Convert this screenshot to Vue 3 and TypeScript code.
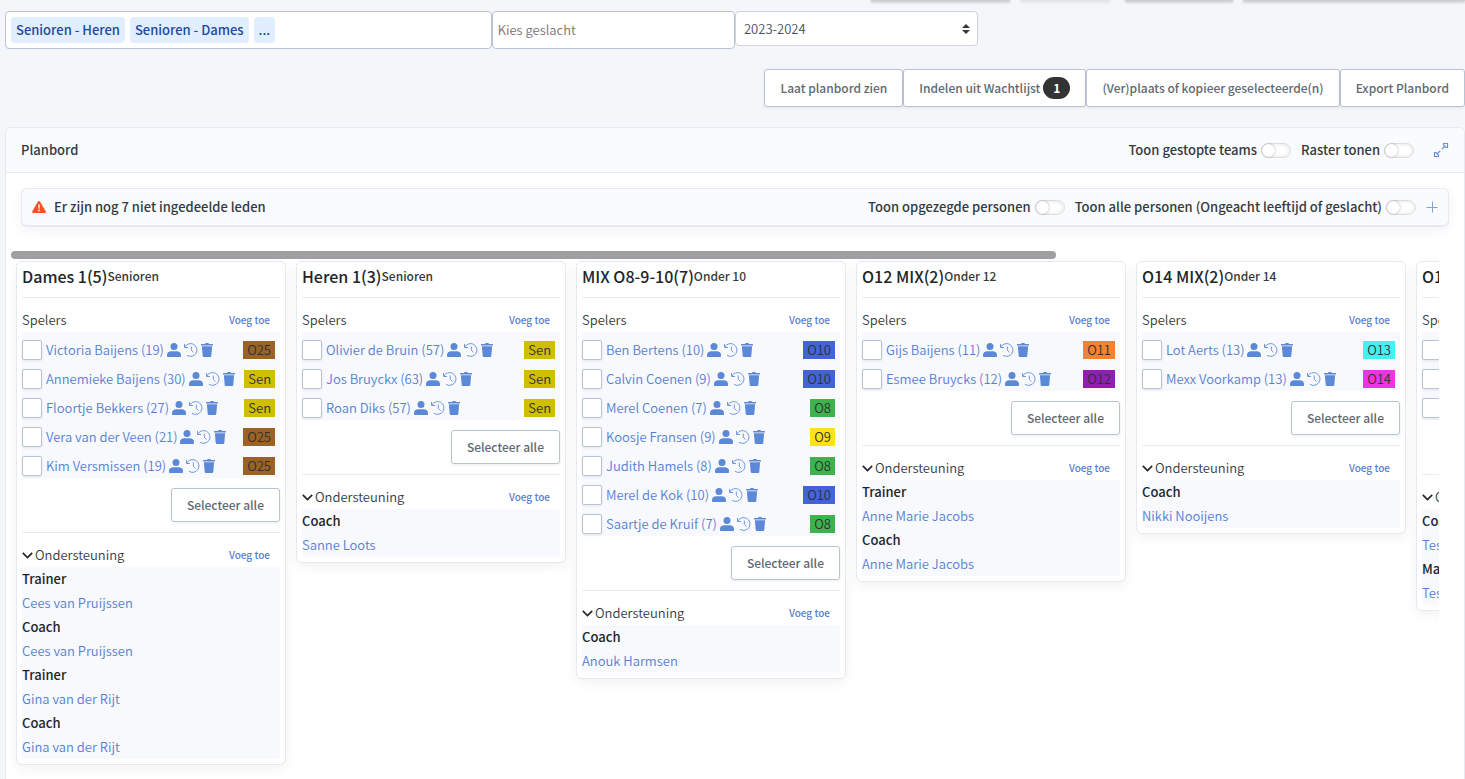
<script setup lang="ts">
import { ref } from 'vue'

interface Player {
  name: string
  group: string
}
interface Staff {
  role: string
  name: string
}
interface Team {
  title: string
  category: string
  players: Player[]
  staff: Staff[]
}

const groupColors: Record<string, string> = {
  O25: '#9a6324',
  Sen: '#d0be00',
  O8: '#3cb44b',
  O9: '#ffe119',
  O10: '#4363d8',
  O11: '#f58231',
  O12: '#911eb4',
  O13: '#46f0f0',
  O14: '#f032e6',
}

const p = (name: string, group: string): Player => ({ name, group })
const s = (role: string, name: string): Staff => ({ role, name })

const teams: Team[] = [
  {
    title: 'Dames 1(5)',
    category: 'Senioren',
    players: [
      p('Victoria Baijens (19)', 'O25'),
      p('Annemieke Baijens (30)', 'Sen'),
      p('Floortje Bekkers (27)', 'Sen'),
      p('Vera van der Veen (21)', 'O25'),
      p('Kim Versmissen (19)', 'O25'),
    ],
    staff: [
      s('Trainer', 'Cees van Pruijssen'),
      s('Coach', 'Cees van Pruijssen'),
      s('Trainer', 'Gina van der Rijt'),
      s('Coach', 'Gina van der Rijt'),
    ],
  },
  {
    title: 'Heren 1(3)',
    category: 'Senioren',
    players: [p('Olivier de Bruin (57)', 'Sen'), p('Jos Bruyckx (63)', 'Sen'), p('Roan Diks (57)', 'Sen')],
    staff: [s('Coach', 'Sanne Loots')],
  },
  {
    title: 'MIX O8-9-10(7)',
    category: 'Onder 10',
    players: [
      p('Ben Bertens (10)', 'O10'),
      p('Calvin Coenen (9)', 'O10'),
      p('Merel Coenen (7)', 'O8'),
      p('Koosje Fransen (9)', 'O9'),
      p('Judith Hamels (8)', 'O8'),
      p('Merel de Kok (10)', 'O10'),
      p('Saartje de Kruif (7)', 'O8'),
    ],
    staff: [s('Coach', 'Anouk Harmsen')],
  },
  {
    title: 'O12 MIX(2)',
    category: 'Onder 12',
    players: [p('Gijs Baijens (11)', 'O11'), p('Esmee Bruycks (12)', 'O12')],
    staff: [s('Trainer', 'Anne Marie Jacobs'), s('Coach', 'Anne Marie Jacobs')],
  },
  {
    title: 'O14 MIX(2)',
    category: 'Onder 14',
    players: [p('Lot Aerts (13)', 'O13'), p('Mexx Voorkamp (13)', 'O14')],
    staff: [s('Coach', 'Nikki Nooijens')],
  },
  {
    title: 'O1',
    category: '',
    players: [p('', ''), p('', ''), p('', '')],
    staff: [s('Coach', 'Tes'), s('Ma', 'Tes')],
  },
]

const season = ref('2023-2024')
const gender = ref('')
</script>

<template>
  <main class="page">
    <div class="top-actions" aria-hidden="true">
      <span class="edge w-a"></span>
      <span class="edge w-b light"></span>
      <span class="edge w-c"></span>
      <span class="edge w-d"></span>
    </div>

    <section class="filters">
      <div class="tags">
        <button type="button" class="tag">Senioren - Heren</button>
        <button type="button" class="tag">Senioren - Dames</button>
        <button type="button" class="tag">...</button>
      </div>
      <input v-model="gender" class="gender" type="text" placeholder="Kies geslacht" aria-label="Kies geslacht" />
      <div class="season">
        <select v-model="season" aria-label="Seizoen">
          <option>2023-2024</option>
        </select>
        <svg viewBox="0 0 8 10" width="8" height="10" aria-hidden="true">
          <path d="M4 0 8 4H0zM4 10 0 6h8z" fill="#343a40" />
        </svg>
      </div>
    </section>

    <nav class="actions">
      <button type="button" class="btn">Laat planbord zien</button>
      <button type="button" class="btn">Indelen uit Wachtlijst<span class="count">1</span></button>
      <button type="button" class="btn">(Ver)plaats of kopieer geselecteerde(n)</button>
      <button type="button" class="btn">Export Planbord</button>
    </nav>

    <section class="panel">
      <header class="panel-head">
        <h1>Planbord</h1>
        <label class="switch">Toon gestopte teams<input type="checkbox" /></label>
        <label class="switch">Raster tonen<input type="checkbox" /></label>
        <button type="button" class="icon-btn expand" aria-label="Volledig scherm">
          <svg viewBox="0 0 16 16" width="16" height="16" fill="none" stroke="#6a90dc" stroke-width="1.200">
            <path d="M10.500 1.500h4v4h-1.500l-2.500-2.500zM12 4 8.800 7.200M5.500 14.500h-4v-4H3l2.500 2.500zM4 12l3.200-3.200" />
          </svg>
        </button>
      </header>

      <div class="notice">
        <svg class="warn" viewBox="0 0 14 12" width="14" height="12" aria-hidden="true">
          <path d="M7 0c.5 0 .8.200 1 .6l5.800 9.900c.4.700 0 1.500-.9 1.500H1.100c-.9 0-1.300-.8-.9-1.500L6 .6C6.200.2 6.500 0 7 0z" fill="#f4511e" />
          <path d="M6.200 3.500h1.600l-.2 4.200H6.400z" fill="#fff" />
          <circle cx="7" cy="9.400" r=".9" fill="#fff" />
        </svg>
        <strong>Er zijn nog 7 niet ingedeelde leden</strong>
        <label class="switch">Toon opgezegde personen<input type="checkbox" /></label>
        <label class="switch">Toon alle personen (Ongeacht leeftijd of geslacht)<input type="checkbox" /></label>
        <button type="button" class="icon-btn" aria-label="Uitklappen">
          <svg viewBox="0 0 12 12" width="12" height="12" fill="none" stroke="#7da0e0">
            <path d="M6.500 0.500v11M0.500 6.500h11" />
          </svg>
        </button>
      </div>

      <div class="board">
        <div class="scrollbar"><div class="thumb"></div></div>
        <div class="columns">
          <article v-for="(team, t) in teams" :key="t" class="card">
            <h2>{{ team.title }}<small>{{ team.category }}</small></h2>
            <hr />
            <div class="sub-head">
              <span>Spelers</span>
              <a href="#">Voeg toe</a>
            </div>
            <ul class="players">
              <li v-for="(player, i) in team.players" :key="i">
                <input type="checkbox" :aria-label="player.name || 'Speler'" />
                <a href="#">{{ player.name }}</a>
                <span class="tools">
                  <svg viewBox="0 0 14 14" width="14" height="14" aria-hidden="true">
                    <circle cx="7" cy="3.500" r="3.500" />
                    <path d="M0 13v-1.200C0 9.700 2 8.300 4.200 8.300h5.600c2.200 0 4.200 1.400 4.200 3.500V13c0 .6-.4 1-1 1H1c-.6 0-1-.4-1-1z" />
                  </svg>
                  <svg class="line" viewBox="0 0 14 14" width="14" height="14" aria-hidden="true">
                    <path d="M.5 1v3.500H4M.8 4.200A6.400 6.400 0 1 1 3 12.300M7.300 3.500v3.800l2.200 2.200" />
                  </svg>
                  <svg viewBox="0 0 12 14" width="12" height="14" aria-hidden="true">
                    <path d="M4 .9C4.100.3 4.500 0 5 0h2c.5 0 .9.300 1 .9h3.500c.3 0 .5.200.5.500v1.100H0V1.400C0 1.100.2.900.5.900zM.9 3.200h10.200l-.8 9.700c-.1.700-.5 1.100-1.200 1.100H2.900c-.7 0-1.100-.4-1.200-1.100z" />
                  </svg>
                </span>
                <span v-if="player.group" class="group" :style="{ backgroundColor: groupColors[player.group] }">{{ player.group }}</span>
              </li>
            </ul>
            <button type="button" class="btn select-all">Selecteer alle</button>
            <hr />
            <div class="sub-head">
              <span class="toggle">
                <svg viewBox="0 0 11 7" width="11" height="7" fill="none" stroke="#212529" stroke-width="1.600" aria-hidden="true">
                  <path d="M.8.900 5.500 5.600 10.200.900" />
                </svg>
                Ondersteuning
              </span>
              <a href="#">Voeg toe</a>
            </div>
            <dl class="staff">
              <template v-for="(m, i) in team.staff" :key="i">
                <dt>{{ m.role }}</dt>
                <dd><a href="#">{{ m.name }}</a></dd>
              </template>
            </dl>
          </article>
        </div>
      </div>
    </section>
  </main>
</template>

<style>
html,
body {
  background: #f4f6fa;
}
</style>

<style scoped>
.page,
.page * {
  box-sizing: border-box;
}
.page {
  min-height: 100vh;
  padding-left: 5px;
  overflow: hidden;
  background: #f4f6fa;
  color: #343a40;
  font-family: 'Noto Sans CJK SC', 'Open Sans', sans-serif;
  font-size: 13px;
  font-weight: 350;
  line-height: 20px;
}
button,
input,
select {
  margin: 0;
  font: inherit;
  color: inherit;
}
a {
  color: #5580d4;
  text-decoration: none;
}
.top-actions {
  display: flex;
  justify-content: flex-end;
  gap: 10px;
  height: 11px;
}
.edge {
  height: 1px;
  background: #cdced2;
  box-shadow: 0 1px 3px rgba(0, 0, 0, 0.45);
}
.light {
  background: #e4e5e9;
  box-shadow: 0 1px 3px rgba(0, 0, 0, 0.2);
}
.w-a {
  width: 139px;
}
.w-b {
  width: 90px;
  margin-right: 5px;
}
.w-c {
  width: 108px;
}
.w-d {
  width: 222px;
}
.filters {
  display: grid;
  grid-template-columns: 4fr 2fr 2fr 4fr;
  align-items: start;
}
.tags,
.gender {
  height: 38px;
  border: 1px solid #b8c4d3;
  border-radius: 4px;
  background: #fff;
}
.tags {
  display: flex;
  gap: 5px;
  padding: 5px;
}
.tag {
  height: 26px;
  padding: 0 5px;
  border: 0;
  border-radius: 4px;
  background: #e1eeff;
  color: #1d4a9c;
  font-weight: 500;
}
.gender {
  min-width: 0;
  padding: 0 5px 2px;
}
.gender::placeholder {
  color: #757575;
  opacity: 1;
}
.season {
  display: grid;
  align-items: center;
}
.season select {
  grid-area: 1 / 1;
  height: 35px;
  padding: 0 8px;
  border: 1px solid #ced4da;
  border-radius: 4px;
  background: #fff;
  color: #495057;
  appearance: none;
}
.season svg {
  grid-area: 1 / 1;
  justify-self: end;
  margin-right: 8px;
  pointer-events: none;
}
.actions {
  display: flex;
  justify-content: flex-end;
  margin-top: 20px;
}
.btn {
  height: 38px;
  padding: 0 15px 1px;
  border: 1px solid #b8c4d3;
  border-radius: 3px;
  background: #fff;
  box-shadow: 0 1px 3px rgba(60, 80, 120, 0.1);
  color: #5f6972;
  font-size: 12px;
  font-weight: 500;
  white-space: nowrap;
}
.count {
  display: inline-block;
  margin-left: 3px;
  padding: 0 10px;
  border-radius: 11px;
  background: #333;
  color: #fff;
  font-weight: 700;
  line-height: 22px;
}
.panel {
  min-height: 660px;
  margin-top: 20px;
  border: 1px solid #e6e9f0;
  border-radius: 6px;
  background: #fff;
}
.panel-head {
  display: flex;
  align-items: center;
  height: 45px;
  padding: 0 15px;
  border-bottom: 1px solid #e6e9f0;
  border-radius: 6px 6px 0 0;
  background: #fafbfe;
}
h1 {
  flex: 1;
  margin: 0;
  font-size: 13px;
  font-weight: 500;
}
.switch {
  display: flex;
  align-items: center;
  gap: 4px;
  margin-right: 10px;
  font-weight: 500;
}
.switch input {
  display: flex;
  width: 30px;
  height: 15px;
  border: 1px solid #dcdcdc;
  border-radius: 8px;
  background: #fff;
  box-shadow: inset 0 0 4px rgba(0, 0, 0, 0.12);
  appearance: none;
}
.switch input::before {
  content: '';
  width: 13px;
  height: 13px;
  border-radius: 50%;
  background: #fff;
  box-shadow: 0 0 2px rgba(0, 0, 0, 0.4);
}
.icon-btn {
  display: flex;
  padding: 0;
  border: 0;
  background: none;
}
.expand {
  margin-left: 9px;
}
.notice {
  display: flex;
  align-items: center;
  height: 39px;
  margin: 15px 15px 0;
  padding: 0 10px;
  border: 1px solid #e6e9f0;
  border-bottom-width: 2px;
  border-radius: 6px;
  background: #fafbfe;
  box-shadow: 0 4px 12px rgba(50, 50, 70, 0.06);
}
.warn {
  margin-right: 8px;
}
.notice strong {
  flex: 1;
  font-weight: 500;
}
.board {
  margin: 24px 25px 0 5px;
  overflow: hidden;
}
.scrollbar {
  height: 8px;
}
.thumb {
  width: 73.2%;
  height: 8px;
  border-radius: 4px;
  background: #9e9fa1;
}
.columns {
  display: flex;
  align-items: flex-start;
  gap: 10px;
  padding: 2px 5px 20px;
}
.card {
  flex: 0 0 270px;
  padding: 5px;
  border: 1px solid #e6e9f0;
  border-radius: 6px;
  background: #fff;
  box-shadow: 0 4px 12px rgba(50, 50, 70, 0.06);
}
h2 {
  display: flex;
  align-items: center;
  height: 20px;
  margin: 0;
  padding-bottom: 2px;
  color: #212529;
  font-size: 16px;
  font-weight: 500;
}
small {
  font-size: 12px;
  color: #343a40;
}
hr {
  height: 1px;
  margin: 10px 0;
  border: 0;
  background: #ebebed;
}
.sub-head {
  display: flex;
  align-items: center;
  justify-content: space-between;
  height: 24px;
}
.sub-head a {
  margin-right: 10px;
  font-size: 10px;
  font-weight: 500;
}
.toggle {
  display: flex;
  align-items: center;
  gap: 2px;
}
.players,
.staff {
  margin: 0;
  border-radius: 4px;
  background: #f8f9fd;
}
.players {
  padding: 1px 0 0;
  list-style: none;
}
.players li {
  display: flex;
  align-items: center;
  height: 29px;
  padding: 5px 5px 0 0;
}
.players input {
  width: 20px;
  height: 20px;
  margin-right: 4px;
  border: 1px solid #b8c4d3;
  border-radius: 2px;
  background: #fff;
  box-shadow: 0 1px 3px rgba(60, 80, 120, 0.12);
  appearance: none;
}
.tools {
  display: flex;
  gap: 3px;
  margin-left: 3px;
}
.tools svg {
  fill: #5c88d8;
}
.tools .line {
  fill: none;
  stroke: #7297dd;
}
.group {
  margin-left: auto;
  padding: 0 4px;
  line-height: 18px;
  color: #2c3136;
}
.select-all {
  display: block;
  height: 34px;
  margin: 10px 0 0 auto;
}
.staff dt,
.staff dd {
  margin: 0;
  line-height: 24px;
}
.staff dt {
  color: #212529;
  font-weight: 500;
}
</style>
